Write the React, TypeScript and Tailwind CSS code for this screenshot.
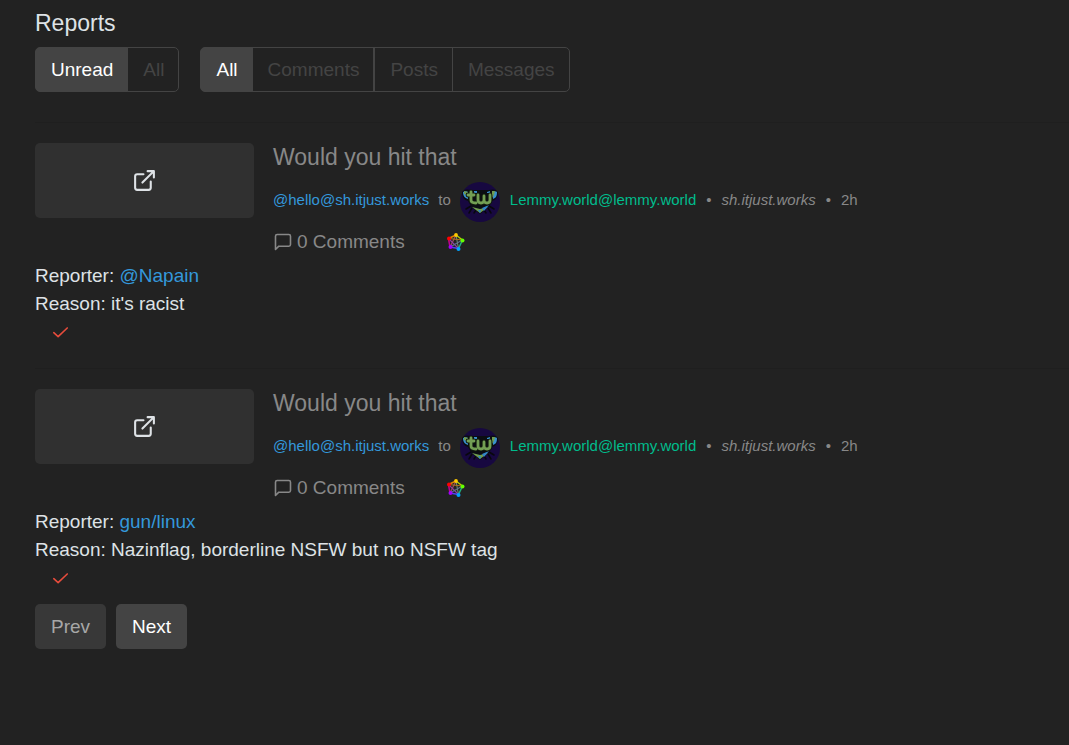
import React, { useState } from "react";

interface iReport {
  id: number;
  title: string;
  reporter: string;
  reason: string;
}

const reports: iReport[] = [
  {
    id: 1,
    title: "Would you hit that",
    reporter: "@Napain",
    reason: "it's racist",
  },
  {
    id: 2,
    title: "Would you hit that",
    reporter: "gun/linux",
    reason: "Nazinflag, borderline NSFW but no NSFW tag",
  },
];

function ExternalLinkIcon() {
  return (
    <svg
      className="size-[25px]"
      viewBox="0 0 24 24"
      fill="none"
      stroke="currentColor"
      strokeWidth="2"
      strokeLinecap="round"
      strokeLinejoin="round"
      aria-hidden="true"
    >
      <path d="M18 13v6a2 2 0 0 1-2 2H5a2 2 0 0 1-2-2V8a2 2 0 0 1 2-2h6" />
      <path d="M15 3h6v6M10 14 21 3" />
    </svg>
  );
}

function CommentIcon() {
  return (
    <svg
      className="size-5"
      viewBox="0 0 24 24"
      fill="none"
      stroke="currentColor"
      strokeWidth="1.9"
      strokeLinecap="round"
      strokeLinejoin="round"
      aria-hidden="true"
    >
      <path d="M21 15a2 2 0 0 1-2 2H7l-4 4V5a2 2 0 0 1 2-2h14a2 2 0 0 1 2 2z" />
    </svg>
  );
}

function CheckIcon() {
  return (
    <svg
      className="size-[19px]"
      viewBox="0 0 24 24"
      fill="none"
      stroke="currentColor"
      strokeWidth="2"
      strokeLinecap="round"
      strokeLinejoin="round"
      aria-hidden="true"
    >
      <path d="M20.5 5 9 16 3.5 11" />
    </svg>
  );
}

function FediverseIcon() {
  return (
    <svg className="size-[19px]" viewBox="1 2 38 38" fill="none" aria-hidden="true">
      <g strokeWidth="3">
        <path d="M19 6 4 13" stroke="#e08000" />
        <path d="M19 6 32 16" stroke="#b4d000" />
        <path d="M4 13 7 30" stroke="#c00090" />
        <path d="M7 30 24 33" stroke="#5040f0" />
        <path d="M32 16 24 33" stroke="#20b080" />
      </g>
      <g strokeWidth="2.2">
        <path d="M19 6 7 30" stroke="#a05060" />
        <path d="M19 6 24 33" stroke="#709070" />
        <path d="M4 13 32 16" stroke="#b07020" />
        <path d="M4 13 24 33" stroke="#9040a0" />
        <path d="M32 16 7 30" stroke="#607090" />
      </g>
      <circle cx="19" cy="6" r="3.8" fill="#ffca00" />
      <circle cx="5" cy="13" r="4" fill="#ff0000" />
      <circle cx="32" cy="17" r="4" fill="#64ff00" />
      <circle cx="8" cy="30" r="4" fill="#a100ff" />
      <circle cx="24" cy="34" r="4" fill="#00a3ff" />
    </svg>
  );
}

function CommunityAvatar() {
  return (
    <svg className="size-10 shrink-0" viewBox="0 0 40 40" fill="none" aria-hidden="true">
      <circle cx="20" cy="20" r="20" fill="#170840" />
      <g stroke="#08070c" strokeWidth="1.5" strokeLinecap="round">
        <path d="M11 24 6 27M12 26 9 31M29 24l5 3M28 26l3 5M16 28l-2 3M24 28l2 3" />
      </g>
      <path
        d="M2 10c2-3 5-3 9-2h18c4-1 7-1 9 2 0 5-2 8-6 9-2 5-7 9-12 13-5-4-10-8-12-13-4-1-6-4-6-9z"
        fill="#0b0d12"
      />
      <path d="M3 10c2-1 4-1 5 0v7c-3-1-5-3-5-7zM37 10c-1-1-3-1-4 0v7c3-1 4-3 4-7z" fill="#3990cd" />
      <path d="m4 9 4 1-1 3-3-1zM32 9h3l-1 4-2 3z" fill="#709c50" />
      <path d="M14 9h3v2h-3zM27 10l3-1v2h-3z" fill="#3990cd" />
      <path d="m12 25 8 6 8-6-4 1-4 1-4-1z" fill="#709c50" />
      <path d="m22 26 7-3-5 6zM18 28l2 3 1-3z" fill="#3186c8" />
      <g stroke="#10180e" strokeWidth="4.8" strokeLinecap="round" strokeLinejoin="round">
        <path d="M11 10v8q0 3 5 3M8 13h6" />
        <path d="M18 13v5q0 3 3 3t3-3v-4 4q0 3 3 3t3-3v-5" />
      </g>
      <g stroke="#739f54" strokeWidth="2.8" strokeLinecap="round" strokeLinejoin="round">
        <path d="M11 10v8q0 3 5 3M8 13h6" />
        <path d="M18 13v5q0 3 3 3t3-3v-4 4q0 3 3 3t3-3v-5" />
      </g>
    </svg>
  );
}

interface iFilterGroup {
  name: string;
  label: string;
  options: string[];
}

function FilterGroup({ name, label, options }: iFilterGroup) {
  const [value, setValue] = useState(options[0]);

  return (
    <div role="radiogroup" aria-label={label} className="flex">
      {options.map((option) => (
        <label
          key={option}
          className="relative -ml-px flex h-[45px] cursor-pointer items-center border border-[#444] pr-[14px] pl-[15px] text-[#444] first:ml-0 first:rounded-l-[5px] last:rounded-r-[5px] nth-3:ml-0 has-checked:bg-[#444] has-checked:text-white"
        >
          <input
            type="radio"
            name={name}
            value={option}
            checked={value === option}
            onChange={() => setValue(option)}
            className="absolute inset-0 cursor-pointer appearance-none"
          />
          {option}
        </label>
      ))}
    </div>
  );
}

function Report({ report }: { report: iReport }) {
  return (
    <article>
      <div className="flex gap-[19px]">
        <a
          href="#"
          aria-label="Open link"
          className="flex h-[75px] w-[219px] shrink-0 items-center justify-center rounded-[5px] bg-[#303030] text-[#dee2e6]"
        >
          <ExternalLinkIcon />
        </a>
        <div className="min-w-0 text-[#888]">
          <h2 className="text-[23px] leading-7">
            <a href="#">{report.title}</a>
          </h2>
          <div className="mt-[11px] flex gap-[10px] text-[15px] leading-9">
            <div className="flex gap-[9px]">
              <a href="#" className="text-[#3498db]">
                @hello@sh.itjust.works
              </a>
              <span>to</span>
              <a href="#" className="flex gap-[10px] text-[#00bc8c]">
                <CommunityAvatar />
                Lemmy.world@lemmy.world
              </a>
            </div>
            <span>•</span>
            <span className="italic">sh.itjust.works</span>
            <span>•</span>
            <span>2h</span>
          </div>
          <div className="flex h-10 items-center gap-[42px]">
            <a href="#" className="flex items-center gap-1">
              <CommentIcon />
              0 Comments
            </a>
            <a href="#" aria-label="Fediverse link">
              <FediverseIcon />
            </a>
          </div>
        </div>
      </div>
      <p>
        Reporter:{" "}
        <a href="#" className="text-[#3498db]">
          {report.reporter}
        </a>
      </p>
      <p>Reason: {report.reason}</p>
      <button
        type="button"
        aria-label="Resolve report"
        className="flex h-[30px] items-center px-4 text-[#e74c3c]"
      >
        <CheckIcon />
      </button>
    </article>
  );
}

export default function App() {
  return (
    <div className="min-h-screen bg-[#222] pt-[9px] pb-24 pl-[35px] font-['Liberation_Sans',Arial,sans-serif] text-[19px] leading-7 text-[#dee2e6]">
      <h1 className="mb-[10px] text-[23px] leading-7">Reports</h1>
      <div className="mb-[30px] flex flex-wrap gap-[21px]">
        <FilterGroup name="status" label="Status" options={["Unread", "All"]} />
        <FilterGroup
          name="type"
          label="Type"
          options={["All", "Comments", "Posts", "Messages"]}
        />
      </div>
      {reports.map((report) => (
        <React.Fragment key={report.id}>
          <hr className="mb-5 border-[#1f1f1f] not-first-of-type:mt-5" />
          <Report report={report} />
        </React.Fragment>
      ))}
      <div className="mt-[10px] flex gap-[10px]">
        <button
          type="button"
          disabled
          className="h-[45px] rounded-[5px] bg-[#383838] px-4 text-[#a7a7a7]"
        >
          Prev
        </button>
        <button type="button" className="h-[45px] rounded-[5px] bg-[#444] px-4 text-white">
          Next
        </button>
      </div>
    </div>
  );
}
